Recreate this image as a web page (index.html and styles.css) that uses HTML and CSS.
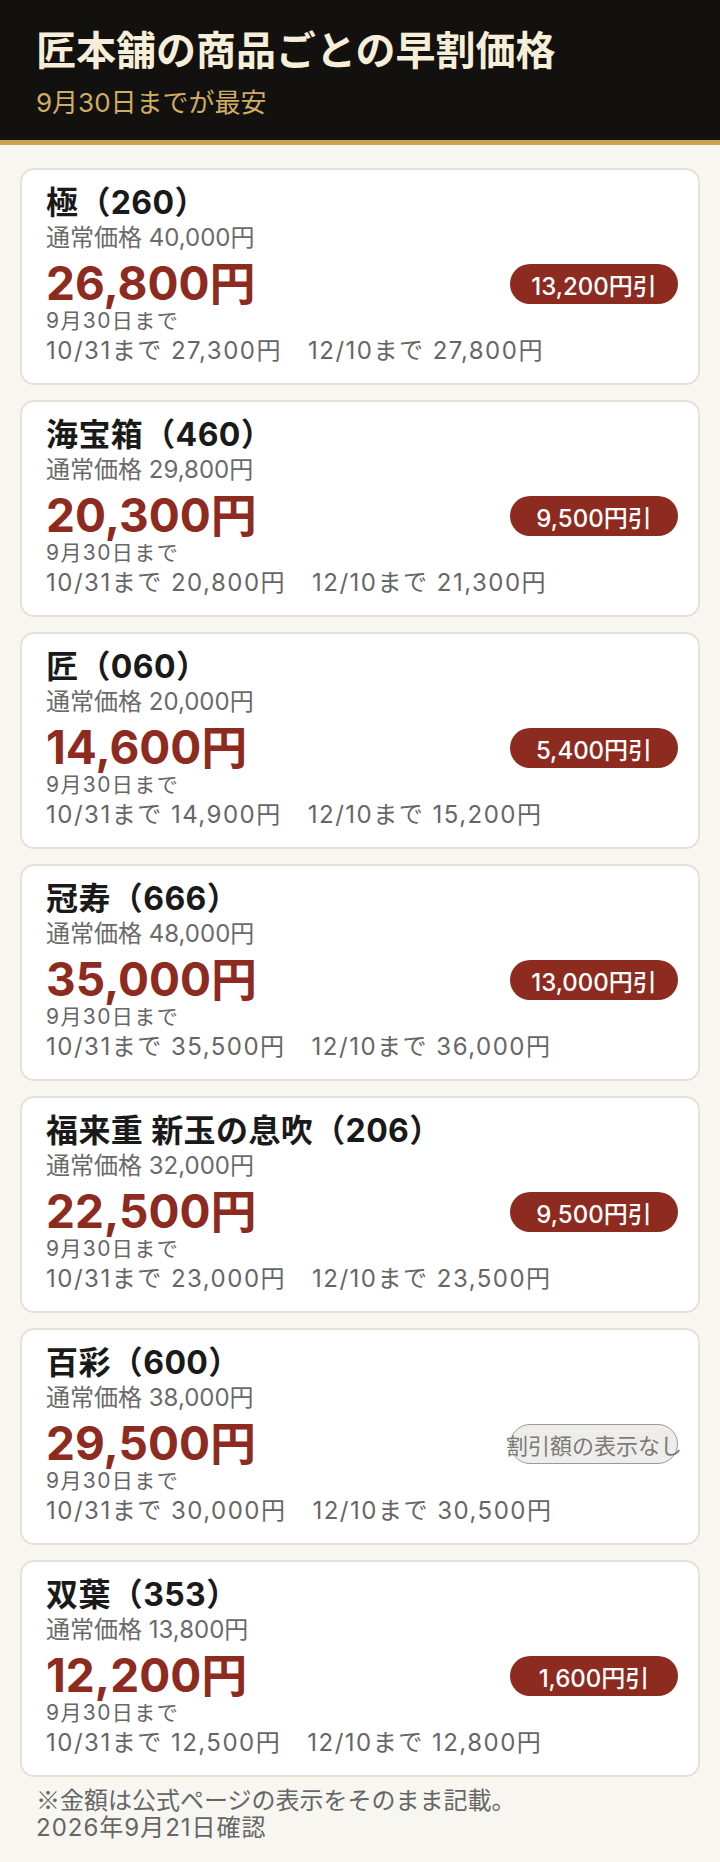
FILE: index.html
```html
<!DOCTYPE html>
<html lang="ja">
<head>
    <meta charset="UTF-8">
    <meta name="viewport" content="width=device-width,user-scalable=no">
    <title>匠本舗の商品ごとの早割価格</title>
    <link rel="stylesheet" href="styles.css">
</head>
<body>
    <header class="head">
        <h1 class="head-title">匠本舗の商品ごとの早割価格</h1>
        <p class="head-sub">9月30日までが最安</p>
    </header>
    <section class="list">
        <div class="card">
            <h2 class="name">極（260）</h2>
            <p class="regular">通常価格 40,000円</p>
            <div class="price-row">
                <span class="price">26,800円</span>
                <span class="off">13,200円引</span>
            </div>
            <p class="until">9月30日まで</p>
            <p class="later"><span>10/31まで 27,300円</span><span>12/10まで 27,800円</span></p>
        </div>
        <div class="card">
            <h2 class="name">海宝箱（460）</h2>
            <p class="regular">通常価格 29,800円</p>
            <div class="price-row">
                <span class="price">20,300円</span>
                <span class="off">9,500円引</span>
            </div>
            <p class="until">9月30日まで</p>
            <p class="later"><span>10/31まで 20,800円</span><span>12/10まで 21,300円</span></p>
        </div>
        <div class="card">
            <h2 class="name">匠（060）</h2>
            <p class="regular">通常価格 20,000円</p>
            <div class="price-row">
                <span class="price">14,600円</span>
                <span class="off">5,400円引</span>
            </div>
            <p class="until">9月30日まで</p>
            <p class="later"><span>10/31まで 14,900円</span><span>12/10まで 15,200円</span></p>
        </div>
        <div class="card">
            <h2 class="name">冠寿（666）</h2>
            <p class="regular">通常価格 48,000円</p>
            <div class="price-row">
                <span class="price">35,000円</span>
                <span class="off">13,000円引</span>
            </div>
            <p class="until">9月30日まで</p>
            <p class="later"><span>10/31まで 35,500円</span><span>12/10まで 36,000円</span></p>
        </div>
        <div class="card">
            <h2 class="name">福来重 新玉の息吹（206）</h2>
            <p class="regular">通常価格 32,000円</p>
            <div class="price-row">
                <span class="price">22,500円</span>
                <span class="off">9,500円引</span>
            </div>
            <p class="until">9月30日まで</p>
            <p class="later"><span>10/31まで 23,000円</span><span>12/10まで 23,500円</span></p>
        </div>
        <div class="card">
            <h2 class="name">百彩（600）</h2>
            <p class="regular">通常価格 38,000円</p>
            <div class="price-row">
                <span class="price">29,500円</span>
                <span class="off none">割引額の表示なし</span>
            </div>
            <p class="until">9月30日まで</p>
            <p class="later"><span>10/31まで 30,000円</span><span>12/10まで 30,500円</span></p>
        </div>
        <div class="card">
            <h2 class="name">双葉（353）</h2>
            <p class="regular">通常価格 13,800円</p>
            <div class="price-row">
                <span class="price">12,200円</span>
                <span class="off">1,600円引</span>
            </div>
            <p class="until">9月30日まで</p>
            <p class="later"><span>10/31まで 12,500円</span><span>12/10まで 12,800円</span></p>
        </div>
        <p class="note"><span class="mark">※</span>金額は公式ページの表示をそのまま記載。<br><span class="date">2026年9月21日確認</span></p>
    </section>
</body>
</html>
```

FILE: styles.css
```css
html,body{ margin:0; padding:0; }
body{
    background:#f8f6f1;
    font-family:Inter,"Noto Sans CJK JP",sans-serif;
    color:#1a1a1a;
}
h1,h2,p{ margin:0; }

/* ヘッダー */
.head{
    background:#121110;
    border-bottom:5px solid #c9a24c;
    height:140px;
    box-sizing:content-box;
    padding:0 36px;
}
.head-title{
    padding-top:26px;
    font-size:40px;
    line-height:50px;
    font-weight:700;
    color:#f6eed9;
}
.head-sub{
    margin-top:12px;
    font-size:26px;
    line-height:30px;
    color:#d1ad62;
}

/* 商品カード */
.list{ padding:23px 20px 0; }
.card{
    background:#fff;
    border:2px solid #e6e1d6;
    border-radius:14px;
    padding:15px 20px 19px 24px;
    margin-bottom:15px;
}
.card .name{
    margin-bottom:2px;
    font-size:32px;
    line-height:36px;
    font-weight:700;
    letter-spacing:0.4px;
    color:#1a1a1a;
}
.card .regular{
    font-size:24px;
    line-height:30px;
    color:#6a6a6a;
}
.card .price-row{
    display:flex;
    align-items:center;
    justify-content:space-between;
    margin-top:6px;
    height:48px;
}
.card .price{
    font-size:46px;
    line-height:48px;
    font-weight:700;
    color:#8e2b20;
}
.card .off{
    width:168px;
    height:40px;
    border-radius:20px;
    background:#8e2b20;
    color:#fff;
    font-size:24px;
    font-weight:500;
    display:flex;
    align-items:center;
    justify-content:center;
    white-space:nowrap;
    margin-top:2px;
}
.card .off.none{
    box-sizing:border-box;
    background:#efede9;
    border:1px solid #9a9a9a;
    color:#7a7a7a;
    font-size:22px;
    font-weight:400;
}
.card .until{
    margin-top:2px;
    font-size:21px;
    line-height:24px;
    letter-spacing:1.4px;
    color:#666;
}
.card .later{
    margin-top:5px;
    font-size:24px;
    line-height:26px;
    letter-spacing:1.5px;
    color:#666;
}
.card .later span{ margin-right:26px; }

.note{
    margin:-7px 0 0 16px;
    font-size:24px;
    line-height:27px;
    color:#666;
}
.note .mark{ font-family:"Noto Sans CJK JP",sans-serif; }
.note .date{ letter-spacing:1px; }
```
